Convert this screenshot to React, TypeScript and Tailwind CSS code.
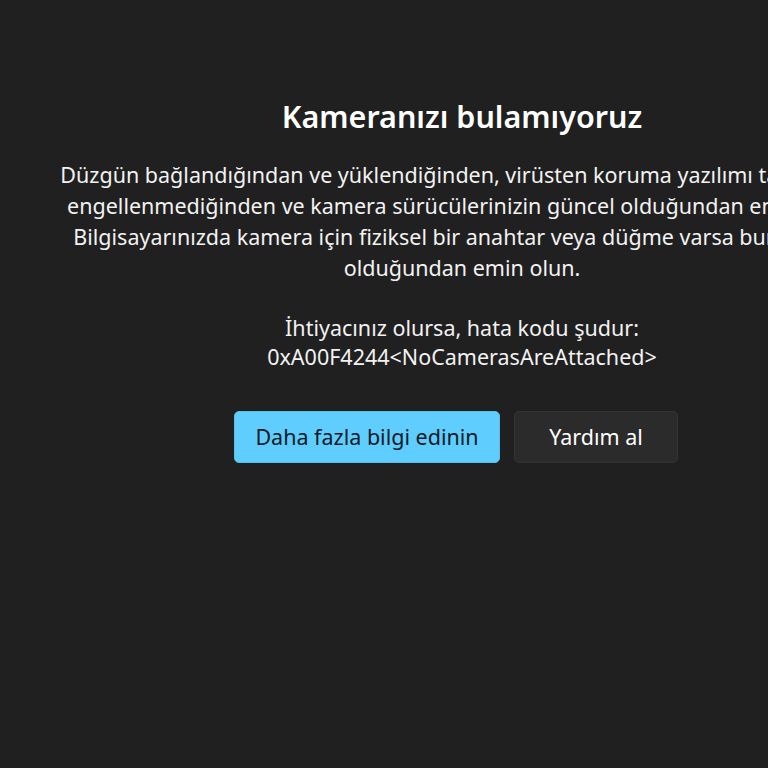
export default function App() {
  return (
    <div className="w-[768px] h-[768px] overflow-hidden bg-[#202020] text-white" style={{ fontFamily: '"Noto Sans", "Open Sans", sans-serif' }}>
      <div className="w-[924px] flex flex-col items-center pt-[96px]">
        <h1 className="text-[30.5px] leading-[40px] font-semibold text-white">Kameranızı bulamıyoruz</h1>
        <p className="mt-[23px] text-[21.5px] leading-[31px] text-center text-[#f2f2f2] whitespace-nowrap">
          Düzgün bağlandığından ve yüklendiğinden, virüsten koruma yazılımı tarafından
          <br />
          engellenmediğinden ve kamera sürücülerinizin güncel olduğundan emin olun.
          <br />
          Bilgisayarınızda kamera için fiziksel bir anahtar veya düğme varsa bunun açık
          <br />
          olduğundan emin olun.
        </p>
        <p className="mt-[30px] text-[21.5px] leading-[29px] text-center text-[#f2f2f2]">
          İhtiyacınız olursa, hata kodu şudur:
          <br />
          0xA00F4244&lt;NoCamerasAreAttached&gt;
        </p>
        <div className="mt-[40px] flex gap-[14px] -translate-x-[6px]">
          <button className="w-[266px] h-[52px] rounded-[5px] bg-[#60cdff] text-[#0b1a24] text-[21.5px] border border-[#5bbde9]">
            Daha fazla bilgi edinin
          </button>
          <button className="w-[164px] h-[52px] rounded-[5px] bg-[#2b2b2b] text-white text-[21.5px] border border-[#333333]">
            Yardım al
          </button>
        </div>
      </div>
    </div>
  );
}
